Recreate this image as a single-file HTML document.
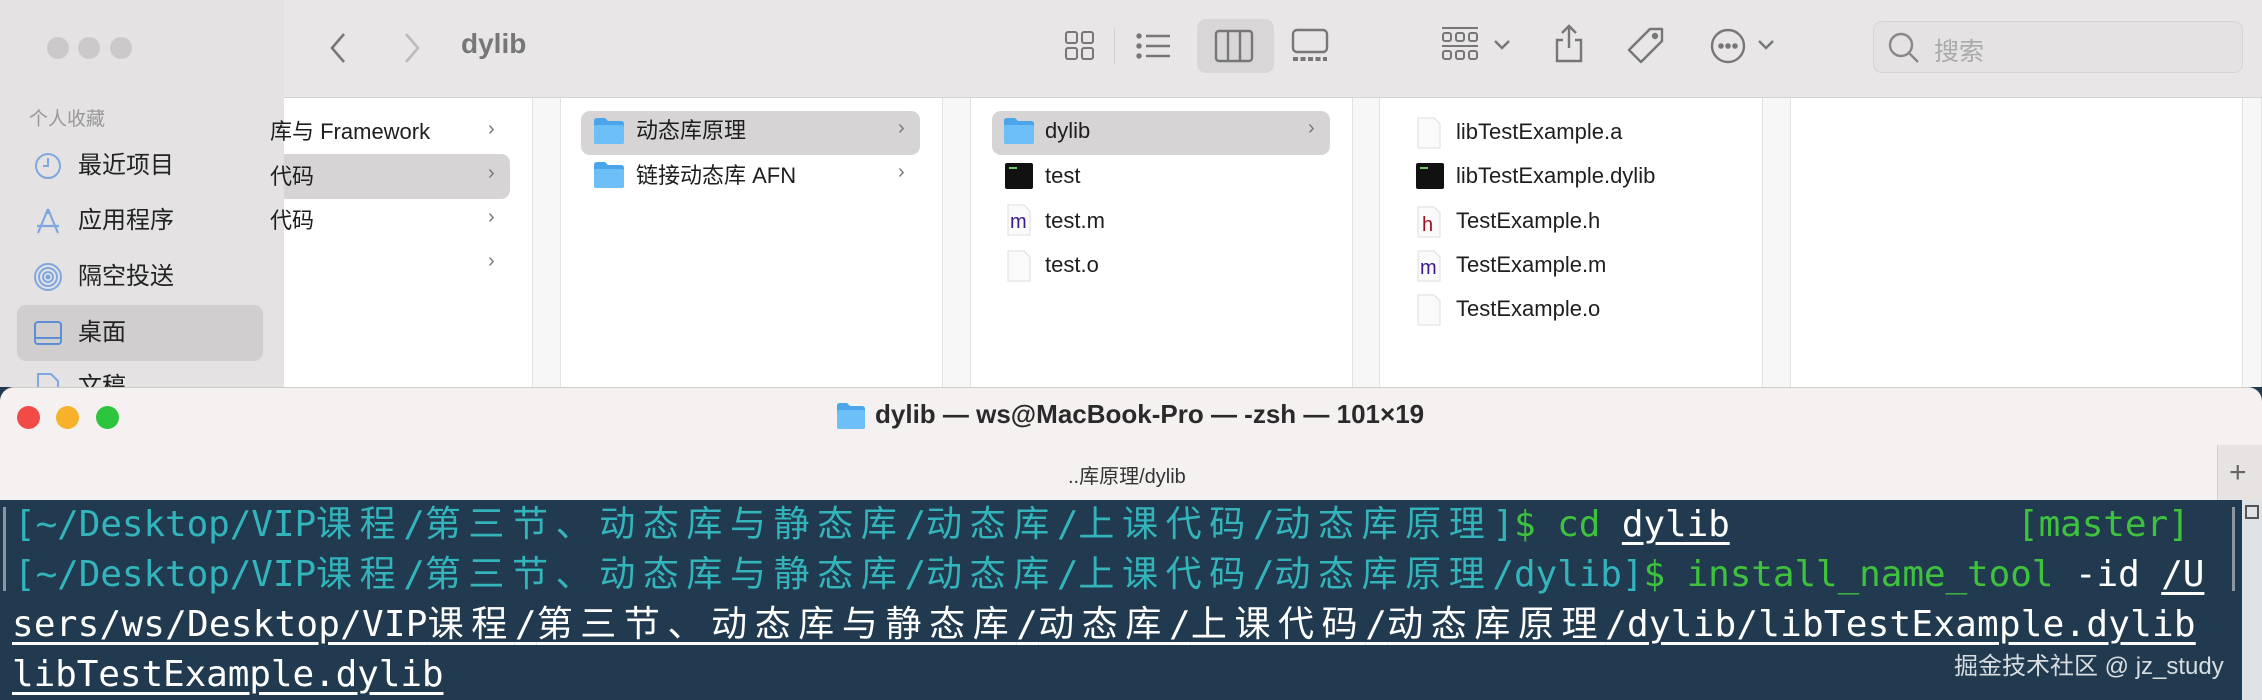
<!DOCTYPE html>
<html><head><meta charset="utf-8"><style>
*{margin:0;padding:0;box-sizing:border-box}
body{width:2262px;height:700px;position:relative;overflow:hidden;background:#fff;font-family:"Liberation Sans","Noto Sans CJK SC",sans-serif}
.a{position:absolute}
.t{position:absolute;font-size:22px;color:#1e1e1e;white-space:nowrap;line-height:30px}
.side{left:0;top:0;width:284px;height:400px;background:#e4e2e2}
.tb{left:284px;top:0;width:1978px;height:98px;background:#e8e6e6;border-bottom:1px solid #d4d2d2}
.strip{top:98px;height:300px;background:#f7f7f7;border-left:1px solid #e2e2e2;border-right:1px solid #e2e2e2}
.st{font-size:24px;color:#222;position:absolute;line-height:30px}
.chev{position:absolute;font-size:20px;color:#777}
.term{left:0;top:387px;width:2262px;height:313px;background:#213a4f}
.tbar{left:0;top:387px;width:2262px;height:113px;background:#f4f1f0;border-radius:14px 14px 0 0;border-top:1px solid #cfcccc}
.ln{position:absolute;left:14px;font-family:"DejaVu Sans Mono","Liberation Mono","Noto Sans CJK SC",monospace;font-size:36px;line-height:50px;white-space:pre;color:#fff;letter-spacing:-0.1px}
.c{color:#33b3ba}.g{color:#3ec23e}.u{text-decoration:underline;text-decoration-thickness:3px;text-underline-offset:6px}
.w{letter-spacing:7.6px}
</style></head><body>
<!-- finder -->
<div class="a side"></div>
<div class="a tb"></div>
<div class="a" style="left:47px;top:37px;width:22px;height:22px;border-radius:50%;background:#cbc9c9"></div>
<div class="a" style="left:78px;top:37px;width:22px;height:22px;border-radius:50%;background:#cbc9c9"></div>
<div class="a" style="left:110px;top:37px;width:22px;height:22px;border-radius:50%;background:#cbc9c9"></div>
<svg class="a" style="left:326px;top:30px" width="24" height="36"><path d="M18 4 L6 18 L18 32" stroke="#777" stroke-width="2.6" fill="none"/></svg>
<svg class="a" style="left:400px;top:30px" width="24" height="36"><path d="M6 4 L18 18 L6 32" stroke="#bbb" stroke-width="2.6" fill="none"/></svg>
<div class="a" style="left:461px;top:28px;font-size:28px;font-weight:bold;color:#777">dylib</div>
<!-- toolbar icons -->
<svg class="a" style="left:1062px;top:28px" width="36" height="36" fill="none" stroke="#777" stroke-width="2"><rect x="4" y="4" width="11" height="11" rx="2"/><rect x="20" y="4" width="11" height="11" rx="2"/><rect x="4" y="20" width="11" height="11" rx="2"/><rect x="20" y="20" width="11" height="11" rx="2"/></svg>
<div class="a" style="left:1114px;top:28px;width:1px;height:36px;background:#d0d0d0"></div>
<svg class="a" style="left:1134px;top:28px" width="40" height="36" fill="none" stroke="#777" stroke-width="2.4"><circle cx="5" cy="8" r="1.5" fill="#777"/><circle cx="5" cy="18" r="1.5" fill="#777"/><circle cx="5" cy="28" r="1.5" fill="#777"/><path d="M12 8H36M12 18H36M12 28H36"/></svg>
<div class="a" style="left:1197px;top:19px;width:77px;height:54px;border-radius:9px;background:#d8d6d6"></div>
<svg class="a" style="left:1214px;top:28px" width="40" height="36" fill="none" stroke="#777" stroke-width="2.4"><rect x="2" y="3" width="36" height="30" rx="3"/><path d="M14 3V33M26 3V33"/></svg>
<svg class="a" style="left:1290px;top:28px" width="40" height="36" fill="none" stroke="#777" stroke-width="2.4"><rect x="3" y="2" width="34" height="22" rx="4"/><path d="M3 31H37" stroke-dasharray="5 2.5" stroke-width="4"/></svg>
<svg class="a" style="left:1440px;top:26px" width="40" height="40" fill="none" stroke="#777" stroke-width="2"><path d="M2 2H38M2 20H38"/><rect x="3" y="7" width="8" height="8" rx="2"/><rect x="16" y="7" width="8" height="8" rx="2"/><rect x="29" y="7" width="8" height="8" rx="2"/><rect x="3" y="25" width="8" height="8" rx="2"/><rect x="16" y="25" width="8" height="8" rx="2"/><rect x="29" y="25" width="8" height="8" rx="2"/></svg>
<svg class="a" style="left:1493px;top:38px" width="18" height="14" fill="none" stroke="#777" stroke-width="2.4"><path d="M2 3L9 10L16 3"/></svg>
<svg class="a" style="left:1553px;top:24px" width="32" height="40" fill="none" stroke="#777" stroke-width="2.4"><path d="M16 2V24M9 9L16 2L23 9M10 16H4V37H28V16H22"/></svg>
<svg class="a" style="left:1626px;top:26px" width="40" height="40" fill="none" stroke="#777" stroke-width="2.4"><path d="M24 3H36V15L15 36L3 24Z" stroke-linejoin="round"/><circle cx="29" cy="10" r="2" fill="#777"/></svg>
<svg class="a" style="left:1709px;top:27px" width="38" height="38" fill="none" stroke="#777" stroke-width="2.4"><circle cx="19" cy="19" r="16"/><circle cx="12" cy="19" r="1.6" fill="#777"/><circle cx="19" cy="19" r="1.6" fill="#777"/><circle cx="26" cy="19" r="1.6" fill="#777"/></svg>
<svg class="a" style="left:1757px;top:38px" width="18" height="14" fill="none" stroke="#777" stroke-width="2.4"><path d="M2 3L9 10L16 3"/></svg>
<div class="a" style="left:1873px;top:21px;width:370px;height:52px;border:1px solid #d6d4d4;border-radius:9px;background:#e4e2e2"></div>
<svg class="a" style="left:1887px;top:31px" width="34" height="34" fill="none" stroke="#888" stroke-width="2.4"><circle cx="14" cy="14" r="11"/><path d="M22 22L31 31"/></svg>
<div class="a" style="left:1934px;top:32px;font-size:25px;color:#aaa">搜索</div>
<!-- sidebar -->
<div class="a" style="left:29px;top:104px;font-size:19px;color:#999">个人收藏</div>
<svg class="a" style="left:33px;top:151px" width="30" height="30" fill="none" stroke="#7fa8e0" stroke-width="2"><circle cx="15" cy="15" r="12"/><path d="M15 7V15H10"/></svg>
<div class="st" style="left:78px;top:151px">最近项目</div>
<svg class="a" style="left:33px;top:206px" width="30" height="30" fill="none" stroke="#7fa8e0" stroke-width="2.2"><path d="M15 3L5 27M15 3L25 27M4 20H26M15 3V8"/></svg>
<div class="st" style="left:78px;top:206px">应用程序</div>
<svg class="a" style="left:33px;top:262px" width="30" height="30" fill="none" stroke="#7fa8e0" stroke-width="2"><circle cx="15" cy="15" r="13"/><circle cx="15" cy="15" r="9"/><circle cx="15" cy="15" r="5"/><circle cx="15" cy="15" r="1.5" fill="#7fa8e0"/></svg>
<div class="st" style="left:78px;top:262px">隔空投送</div>
<div class="a" style="left:17px;top:305px;width:246px;height:56px;border-radius:9px;background:#d0cece"></div>
<svg class="a" style="left:33px;top:318px" width="30" height="30" fill="none" stroke="#5d8fd6" stroke-width="2"><rect x="2" y="4" width="26" height="22" rx="3"/><path d="M2 20H28"/></svg>
<div class="st" style="left:78px;top:318px">桌面</div>
<svg class="a" style="left:35px;top:372px" width="26" height="20" fill="none" stroke="#7fa8e0" stroke-width="2"><path d="M3 2H16L23 9V20H3Z"/></svg>
<div class="st" style="left:78px;top:372px">文稿</div>
<!-- columns -->
<div class="a strip" style="left:532px;width:29px"></div>
<div class="a strip" style="left:942px;width:29px"></div>
<div class="a strip" style="left:1352px;width:28px"></div>
<div class="a strip" style="left:1762px;width:29px"></div>
<div class="a strip" style="left:2242px;width:20px"></div>
<div class="a" style="left:284px;top:154px;width:226px;height:45px;border-radius:0 9px 9px 0;background:#d6d4d4"></div>
<div class="t" style="left:270px;top:117px">库与 Framework</div>
<div class="t" style="left:270px;top:162px">代码</div>
<div class="t" style="left:270px;top:206px">代码</div>
<div class="chev" style="left:488px;top:118px">›</div><div class="chev" style="left:488px;top:162px">›</div><div class="chev" style="left:488px;top:206px">›</div><div class="chev" style="left:488px;top:250px">›</div>
<div class="a" style="left:581px;top:111px;width:339px;height:44px;border-radius:9px;background:#d6d4d4"></div>
<svg class="a" style="left:593px;top:117px" width="32" height="28"><path d="M1 4Q1 1 4 1H12L15 4H28Q31 4 31 7V25Q31 27 28 27H4Q1 27 1 25Z" fill="#4aa5ea"/><rect x="1" y="8" width="30" height="19" rx="2" fill="#6cc0f7"/></svg>
<div class="t" style="left:636px;top:116px">动态库原理</div>
<div class="chev" style="left:898px;top:117px">›</div>
<svg class="a" style="left:593px;top:161px" width="32" height="28"><path d="M1 4Q1 1 4 1H12L15 4H28Q31 4 31 7V25Q31 27 28 27H4Q1 27 1 25Z" fill="#4aa5ea"/><rect x="1" y="8" width="30" height="19" rx="2" fill="#6cc0f7"/></svg>
<div class="t" style="left:636px;top:161px">链接动态库 AFN</div>
<div class="chev" style="left:898px;top:161px">›</div>
<div class="a" style="left:992px;top:111px;width:338px;height:44px;border-radius:9px;background:#d6d4d4"></div>
<svg class="a" style="left:1003px;top:117px" width="32" height="28"><path d="M1 4Q1 1 4 1H12L15 4H28Q31 4 31 7V25Q31 27 28 27H4Q1 27 1 25Z" fill="#4aa5ea"/><rect x="1" y="8" width="30" height="19" rx="2" fill="#6cc0f7"/></svg>
<div class="t" style="left:1045px;top:116px">dylib</div>
<div class="chev" style="left:1308px;top:117px">›</div>
<!-- col3 files -->
<div class="a" style="left:1005px;top:163px;width:28px;height:26px;background:#111;border-radius:2px"><div class="a" style="left:4px;top:4px;width:8px;height:2px;background:#6c6"></div></div>
<div class="t" style="left:1045px;top:161px">test</div>
<svg class="a" style="left:1007px;top:204px" width="24" height="32"><path d="M1 1H17L23 7V31H1Z" fill="#fafafa" stroke="#ddd"/><text x="3" y="24" font-size="20" fill="#3a1a8a" font-family="Liberation Sans">m</text></svg>
<div class="t" style="left:1045px;top:206px">test.m</div>
<svg class="a" style="left:1007px;top:250px" width="24" height="32"><path d="M1 1H17L23 7V31H1Z" fill="#fafafa" stroke="#ddd"/></svg>
<div class="t" style="left:1045px;top:250px">test.o</div>
<!-- col4 -->
<svg class="a" style="left:1417px;top:117px" width="24" height="32"><path d="M1 1H17L23 7V31H1Z" fill="#fafafa" stroke="#ddd"/></svg>
<div class="t" style="left:1456px;top:117px">libTestExample.a</div>
<div class="a" style="left:1416px;top:163px;width:28px;height:26px;background:#111;border-radius:2px"><div class="a" style="left:4px;top:4px;width:8px;height:2px;background:#6c6"></div></div>
<div class="t" style="left:1456px;top:161px">libTestExample.dylib</div>
<svg class="a" style="left:1417px;top:206px" width="24" height="32"><path d="M1 1H17L23 7V31H1Z" fill="#fafafa" stroke="#ddd"/><text x="5" y="25" font-size="20" fill="#a01020" font-family="Liberation Sans">h</text></svg>
<div class="t" style="left:1456px;top:206px">TestExample.h</div>
<svg class="a" style="left:1417px;top:250px" width="24" height="32"><path d="M1 1H17L23 7V31H1Z" fill="#fafafa" stroke="#ddd"/><text x="3" y="24" font-size="20" fill="#3a1a8a" font-family="Liberation Sans">m</text></svg>
<div class="t" style="left:1456px;top:250px">TestExample.m</div>
<svg class="a" style="left:1417px;top:294px" width="24" height="32"><path d="M1 1H17L23 7V31H1Z" fill="#fafafa" stroke="#ddd"/></svg>
<div class="t" style="left:1456px;top:294px">TestExample.o</div>
<!-- terminal -->
<div class="a term"></div>
<div class="a tbar"></div>
<div class="a" style="left:17px;top:406px;width:23px;height:23px;border-radius:50%;background:#f24b45"></div>
<div class="a" style="left:56px;top:406px;width:23px;height:23px;border-radius:50%;background:#f7b12a"></div>
<div class="a" style="left:96px;top:406px;width:23px;height:23px;border-radius:50%;background:#2dc43e"></div>
<svg class="a" style="left:836px;top:402px" width="30" height="28"><path d="M1 4Q1 1 4 1H11L14 4H26Q29 4 29 7V25Q29 27 26 27H4Q1 27 1 25Z" fill="#4aa5ea"/><rect x="1" y="8" width="28" height="19" rx="2" fill="#6cc0f7"/></svg>
<div class="a" style="left:875px;top:399px;font-size:26px;font-weight:bold;color:#2a2a2a;white-space:nowrap">dylib — ws@MacBook-Pro — -zsh — 101×19</div>
<div class="a" style="left:1068px;top:460px;font-size:20px;color:#333;white-space:nowrap">..库原理/dylib</div>
<div class="a" style="left:2217px;top:445px;width:45px;height:55px;background:#e6e3e2;border-left:1px solid #d0cdcc"></div>
<div class="a" style="left:2229px;top:456px;font-size:30px;color:#666">+</div>
<div class="a" style="left:2242px;top:500px;width:20px;height:200px;background:#dfe3e6"></div>
<div class="a" style="left:2245px;top:505px;width:14px;height:14px;border:2px solid #555"></div>
<div class="a" style="left:3px;top:507px;width:3px;height:84px;background:#8a97a2"></div>
<div class="a" style="left:2232px;top:507px;width:3px;height:84px;background:#8a97a2"></div>
<div class="ln" style="top:500px"><span class="c">[~/Desktop/VIP<span class="w">课程</span>/<span class="w">第三节、动态库与静态库</span>/<span class="w">动态库</span>/<span class="w">上课代码</span>/<span class="w">动态库原理</span>]</span><span class="g">$ cd </span><span class="u">dylib</span></div>
<div class="ln g" style="top:500px;left:2017px">[master]</div>
<div class="ln" style="top:550px"><span class="c">[~/Desktop/VIP<span class="w">课程</span>/<span class="w">第三节、动态库与静态库</span>/<span class="w">动态库</span>/<span class="w">上课代码</span>/<span class="w">动态库原理</span>/dylib]</span><span class="g">$ install_name_tool</span> -id <span class="u">/U</span></div>
<div class="ln u" style="top:600px;left:12px;letter-spacing:0.2px">sers/ws/Desktop/VIP<span class="w">课程</span>/<span class="w">第三节、动态库与静态库</span>/<span class="w">动态库</span>/<span class="w">上课代码</span>/<span class="w">动态库原理</span>/dylib/libTestExample.dylib</div>
<div class="ln u" style="top:650px;left:12px">libTestExample.dylib</div>
<div class="a" style="left:1954px;top:646px;font-size:24px;color:#d8dde2;white-space:nowrap">掘金技术社区 @ jz_study</div>
</body></html>
